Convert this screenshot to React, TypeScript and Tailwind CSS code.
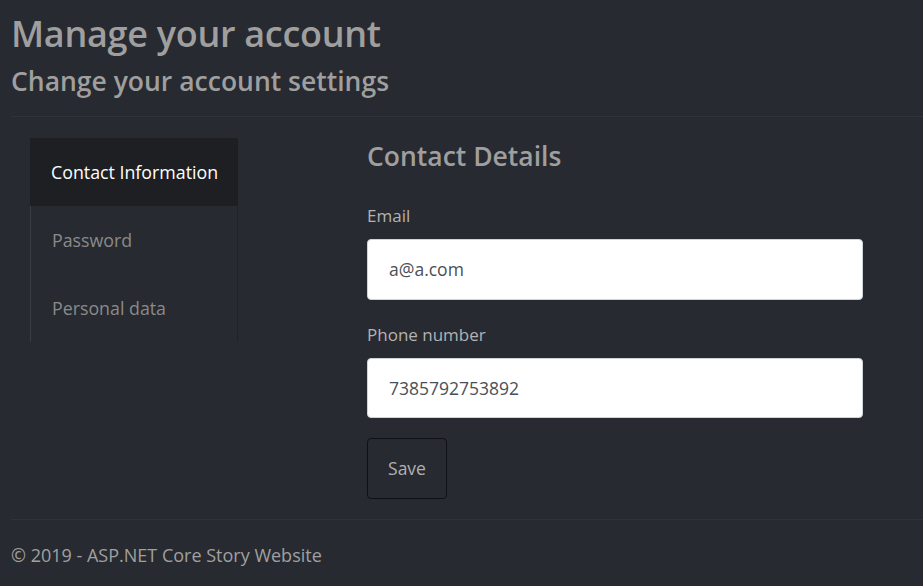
import React from "react";

export default function App() {
  const font = { fontFamily: '"Open Sans", "Noto Sans", sans-serif' };
  return (
    <div className="min-h-[586px] w-full bg-[#272a30] text-[#a0a0a0]" style={font}>
      <div className="pl-[11px]">
        <h1 className="pt-[10px] text-[36px] leading-[48px] font-semibold text-[#9f9f9f] tracking-[-0.3px]">
          Manage your account
        </h1>
        <h4 className="mt-[5px] text-[26.5px] leading-[36px] font-semibold text-[#9f9f9f]">
          Change your account settings
        </h4>
        <div className="mt-[17px] h-px bg-[#30333a]" />
      </div>

      <div className="flex pt-[21px]">
        <div className="ml-[30px] w-[208px] shrink-0 flex flex-col text-[17.8px]">
          <div className="h-[68px] flex items-center pl-[21px] bg-[#1d1f23] text-white">
            Contact Information
          </div>
          <div className="h-[68px] flex items-center pl-[21px] border-l border-r border-l-[#3a3d43] border-r-[#202226] text-[#8a8a8a]">
            Password
          </div>
          <div className="h-[68px] flex items-center pl-[21px] border-l border-r border-l-[#3a3d43] border-r-[#202226] text-[#8a8a8a]">
            Personal data
          </div>
        </div>

        <div className="ml-[129px] w-[496px]">
          <h4 className="mt-[0px] text-[26.5px] leading-[36px] font-semibold text-[#9f9f9f]">
            Contact Details
          </h4>
          <div className="mt-[29px] text-[17px] leading-[26px] text-[#b3b3b3]">Email</div>
          <div className="mt-[10px] h-[61px] rounded-[4px] bg-white border border-[#ced4da] flex items-center pl-[21px] text-[17.5px] text-[#495057]">
            a@a.com
          </div>
          <div className="mt-[22px] text-[17px] leading-[26px] text-[#b3b3b3]">Phone number</div>
          <div className="mt-[10px] h-[60px] rounded-[4px] bg-white border border-[#ced4da] flex items-center pl-[21px] text-[17.5px] text-[#495057]">
            7385792753892
          </div>
          <button className="mt-[20px] h-[61px] w-[80px] rounded-[4px] border border-[#101114] bg-transparent text-[17.5px] text-[#b0b0b0]">
            Save
          </button>
        </div>
      </div>

      <div className="pl-[11px] mt-[20px]">
        <div className="h-px bg-[#30333a]" />
        <div className="pt-[22px] text-[18px] leading-[26px] text-[#a0a0a0]">
          © 2019 - ASP.NET Core Story Website
        </div>
      </div>
    </div>
  );
}
